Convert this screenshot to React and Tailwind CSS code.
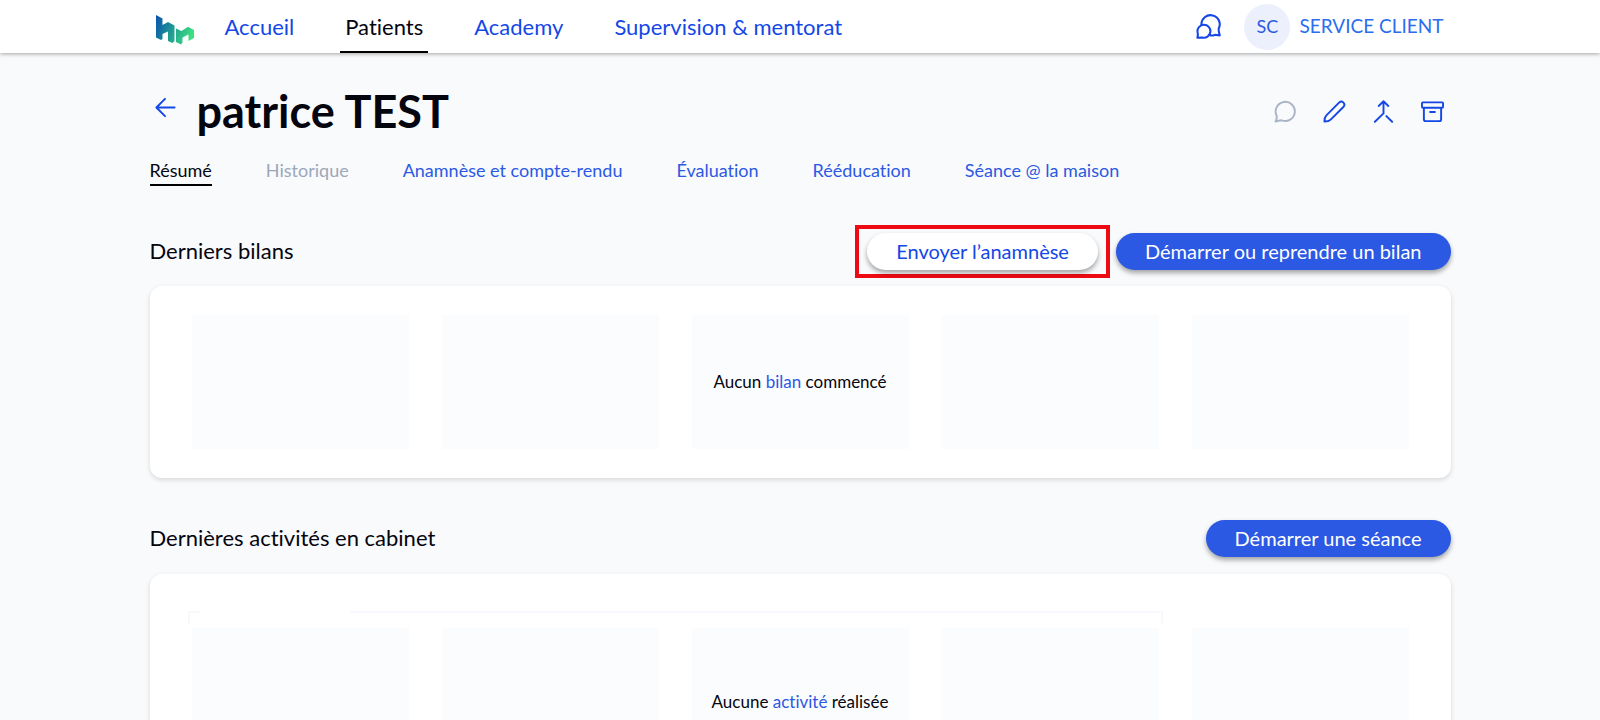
import React from "react";

const navItems = ["Accueil", "Patients", "Academy", "Supervision & mentorat"];

const tabs = [
  { label: "Résumé", active: true },
  { label: "Historique", disabled: true },
  { label: "Anamnèse et compte-rendu" },
  { label: "Évaluation" },
  { label: "Rééducation" },
  { label: "Séance @ la maison" },
];

function Logo() {
  return (
    <svg viewBox="0 0 38 30" className="h-[30px] w-[38px]" aria-hidden="true">
      <defs>
        <linearGradient id="logo-gradient" x1="0" y1="0" x2="38" y2="14" gradientUnits="userSpaceOnUse">
          <stop offset="0" stopColor="#0a4fae" />
          <stop offset="0.5" stopColor="#1f9b93" />
          <stop offset="1" stopColor="#3de07f" />
        </linearGradient>
      </defs>
      <path
        fill="url(#logo-gradient)"
        d="M0 0 L6.500 3.500 V10 L12 7 L18.500 10.500 V26 L16.500 28 L12 26 V16.500 L6.500 19 V24 L5 25 L0 22.500 Z M20 13.500 L25.500 16 L32 11.800 L38 15 V23 L32.500 26 V19.500 L26.500 22.500 V27.500 L25 29.500 L20 27 Z"
      />
    </svg>
  );
}

function Icon({ children, className = "size-[23px]" }) {
  return (
    <svg
      viewBox="0 0 24 24"
      className={className}
      fill="none"
      stroke="currentColor"
      strokeWidth="2"
      strokeLinecap="round"
      strokeLinejoin="round"
      aria-hidden="true"
    >
      {children}
    </svg>
  );
}

function PillButton({ children, secondary = false }) {
  return (
    <button
      type="button"
      className={
        "h-[37px] rounded-full px-[29px] pb-[2px] text-[20px] leading-6 shadow-[0_3px_5px_rgba(0,0,0,0.35)] " +
        (secondary ? "bg-white text-[#1447e6]" : "bg-[#2b59e3] text-white")
      }
    >
      {children}
    </button>
  );
}

function Tiles({ tall = false, children }) {
  return (
    <div className="grid grid-cols-5 gap-x-[33px]">
      {[0, 1, 2, 3, 4].map((i) => (
        <div
          key={i}
          className={"flex items-center justify-center bg-[#fbfcfe] " + (tall ? "h-[148px]" : "h-[134px]")}
        >
          {i === 2 && <p className="text-[17px] leading-6 whitespace-nowrap">{children}</p>}
        </div>
      ))}
    </div>
  );
}

export default function App() {
  return (
    <div className="min-h-screen bg-[#f9fafc] font-['Lato',sans-serif] text-[#05050f] [font-variant-ligatures:none]">
      <header className="relative bg-white shadow-[0_1px_4px_rgba(0,0,0,0.35)]">
        <div className="mx-auto flex h-[53px] max-w-[1301px] items-stretch pr-[7px] pl-[6px]">
          <a href="#" aria-label="Accueil HappyNeuron" className="mr-[26px] flex items-center pt-[6px]">
            <Logo />
          </a>
          <nav className="flex gap-[41px]">
            {navItems.map((label) => (
              <a
                key={label}
                href="#"
                className={
                  "flex items-center border-b-2 px-[5px] pt-[2px] text-[22px] leading-7 " +
                  (label === "Patients" ? "border-black text-[#05050f]" : "border-transparent text-[#1447e6]")
                }
              >
                {label}
              </a>
            ))}
          </nav>
          <div className="ml-auto flex items-center gap-[23px]">
            <button type="button" aria-label="Messages" className="text-[#1447e6]">
              <Icon className="size-[25px]">
                <path d="M5.200 10.200 A8.800 8.800 0 1 1 21.800 14 Q21.500 16 22.800 20.500 L18 20 Q15 21.500 12.800 19.800" />
                <path d="M1.300 22.800 Q2.200 20 1.500 17.500 A6.200 6.200 0 1 1 6 22.500 Z" />
              </Icon>
            </button>
            <button type="button" className="flex items-center gap-[9px] text-[19px] text-[#2b6df0]">
              <span className="flex size-[46px] items-center justify-center rounded-full bg-[#ecf0fd] text-[18px] text-[#2b59e3]">
                SC
              </span>
              SERVICE CLIENT
            </button>
          </div>
        </div>
      </header>

      <main className="mx-auto max-w-[1301px]">
        <div className="flex items-center pt-[31px] pr-[7px]">
          <a href="#" aria-label="Retour" className="mr-[20px] ml-1 pb-2 text-[#1447e6]">
            <Icon>
              <path d="M21.500 12 H3 M11.500 3 L2.500 12 L11.500 21" />
            </Icon>
          </a>
          <h1 className="text-[45px] leading-[54px] font-bold">patrice TEST</h1>
          <div className="ml-auto flex items-center gap-[26px] text-[#1447e6]">
            <button type="button" aria-label="Message" className="text-[#a9b5c6]" disabled>
              <Icon>
                <path d="M1.500 22.500 Q3.500 19.500 2.600 16 A10 10 0 1 1 8 21.200 Q5 21.500 1.500 22.500 Z" />
              </Icon>
            </button>
            <button type="button" aria-label="Modifier">
              <Icon>
                <path d="M1.500 22.500 Q1.500 18 3.500 16 L17 2.500 A3.200 3.200 0 0 1 21.500 7 L8 20.500 Q6 22.500 1.500 22.500 Z" />
              </Icon>
            </button>
            <button type="button" aria-label="Fusionner">
              <Icon>
                <path d="M7 6.200 L12 1.300 L17 6.200 M12 1.300 V14 L3 22.700 M15 16.800 L21 22.700" />
              </Icon>
            </button>
            <button type="button" aria-label="Archiver">
              <Icon>
                <path d="M2 2.500 H22 Q23 2.500 23 3.500 V7 Q23 8 22 8 H2 Q1 8 1 7 V3.500 Q1 2.500 2 2.500 Z M3 8 V20 Q3 22 5 22 H19 Q21 22 21 20 V8 M9.500 12.500 H14.500" />
              </Icon>
            </button>
          </div>
        </div>

        <nav className="mt-5 flex gap-[54px]">
          {tabs.map(({ label, active, disabled }) => (
            <a
              key={label}
              href="#"
              aria-disabled={disabled}
              className={
                "border-b-2 pb-[2px] text-[18px] leading-6 " +
                (active
                  ? "border-black text-[#05050f]"
                  : disabled
                    ? "border-transparent text-[#9ba8ba]"
                    : "border-transparent text-[#2b59e3]")
              }
            >
              {label}
            </a>
          ))}
        </nav>

        <section className="pt-[39px]">
          <div className="flex items-center justify-between">
            <h2 className="pb-[2px] text-[22px] leading-7">Derniers bilans</h2>
            <div className="flex items-center gap-[6px]">
              <div className="border-4 border-[#ee0a12] px-2 py-[4px]">
                <PillButton secondary>Envoyer l’anamnèse</PillButton>
              </div>
              <PillButton>Démarrer ou reprendre un bilan</PillButton>
            </div>
          </div>
          <div className="mt-2 rounded-xl bg-white px-[42px] py-[29px] shadow-[0_2px_5px_rgba(0,0,0,0.14)]">
            <Tiles>
              Aucun <a href="#" className="text-[#2b59e3]">bilan</a> commencé
            </Tiles>
          </div>
        </section>

        <section className="pt-[42px]">
          <div className="flex items-center justify-between">
            <h2 className="pb-[2px] text-[22px] leading-7">Dernières activités en cabinet</h2>
            <PillButton>Démarrer une séance</PillButton>
          </div>
          <div className="mt-[17px] rounded-xl bg-white px-[42px] pt-[37px] pb-[29px] shadow-[0_2px_5px_rgba(0,0,0,0.14)]">
            <div className="mb-1 grid grid-cols-5 gap-x-[33px]">
              <div className="col-span-4 -mx-1 flex h-[13px] gap-[150px]">
                <div className="w-3 border-t-2 border-l-2 border-[#f8f9fc]" />
                <div className="flex-1 border-t-2 border-r-2 border-[#f8f9fc]" />
              </div>
            </div>
            <Tiles tall>
              Aucune <a href="#" className="text-[#2b59e3]">activité</a> réalisée
            </Tiles>
          </div>
        </section>
      </main>
    </div>
  );
}
